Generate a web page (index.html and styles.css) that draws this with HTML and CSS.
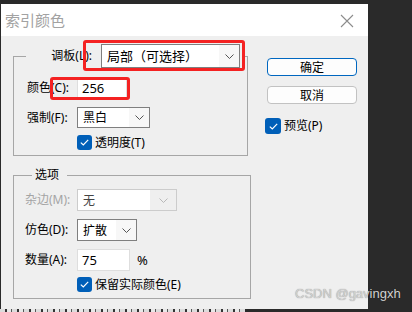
FILE: index.html
```html
<!DOCTYPE html>
<html lang="zh-CN">
<head>
    <meta charset="UTF-8">
    <title>索引颜色</title>
    <link rel="stylesheet" href="styles.css">
</head>
<body>

    <div class="desktop">
        <div class="dialog">
            <div class="titlebar">
                <span class="title">索引颜色</span>
                <svg class="close-icon" width="14" height="14" viewBox="0 0 14 14">
                    <path d="M1 1 L13 13 M13 1 L1 13" stroke="#8c8c8c" stroke-width="1.1" fill="none"/>
                </svg>
            </div>

            <div class="dialog-body">
                <div class="left-col">
                    <fieldset class="group group-palette">
                        <legend class="palette-row">
                            <span class="palette-label">调板(L):</span>
                            <div class="combo combo-palette">
                                <span class="combo-text">局部（可选择）</span>
                                <span class="combo-arrow">
                                    <svg width="9" height="5" viewBox="0 0 9 5"><polyline points="0.5,0.5 4.5,4.5 8.5,0.5" fill="none" stroke="#555" stroke-width="1"/></svg>
                                </span>
                            </div>
                        </legend>

                        <div class="field-row row-colors">
                            <span class="field-label">颜色(C):</span>
                            <div class="text-input input-colors">256</div>
                        </div>
                        <div class="field-row row-forced">
                            <span class="field-label">强制(F):</span>
                            <div class="combo combo-forced">
                                <span class="combo-text">黑白</span>
                                <span class="combo-arrow">
                                    <svg width="9" height="5" viewBox="0 0 9 5"><polyline points="0.5,0.5 4.5,4.5 8.5,0.5" fill="none" stroke="#555" stroke-width="1"/></svg>
                                </span>
                            </div>
                        </div>
                        <div class="check-row row-transparency">
                            <span class="checkbox">
                                <svg width="9" height="7" viewBox="0 0 9 7"><polyline points="0.8,3.6 3.3,6 8.2,0.9" fill="none" stroke="#fff" stroke-width="1.2"/></svg>
                            </span>
                            <span class="check-label">透明度(T)</span>
                        </div>
                    </fieldset>

                    <fieldset class="group group-options">
                        <legend class="group-caption">选项</legend>

                        <div class="field-row row-matte">
                            <span class="field-label disabled">杂边(M):</span>
                            <div class="combo combo-matte disabled">
                                <span class="combo-text">无</span>
                                <span class="combo-arrow">
                                    <svg width="9" height="5" viewBox="0 0 9 5"><polyline points="0.5,0.5 4.5,4.5 8.5,0.5" fill="none" stroke="#b8b8b8" stroke-width="1"/></svg>
                                </span>
                            </div>
                        </div>
                        <div class="field-row row-dither">
                            <span class="field-label">仿色(D):</span>
                            <div class="combo combo-dither">
                                <span class="combo-text">扩散</span>
                                <span class="combo-arrow">
                                    <svg width="9" height="5" viewBox="0 0 9 5"><polyline points="0.5,0.5 4.5,4.5 8.5,0.5" fill="none" stroke="#555" stroke-width="1"/></svg>
                                </span>
                            </div>
                        </div>
                        <div class="field-row row-amount">
                            <span class="field-label">数量(A):</span>
                            <div class="text-input input-amount">75</div>
                            <span class="unit">%</span>
                        </div>
                        <div class="check-row row-preserve">
                            <span class="checkbox">
                                <svg width="9" height="7" viewBox="0 0 9 7"><polyline points="0.8,3.6 3.3,6 8.2,0.9" fill="none" stroke="#fff" stroke-width="1.2"/></svg>
                            </span>
                            <span class="check-label">保留实际颜色(E)</span>
                        </div>
                    </fieldset>
                </div>

                <div class="right-col">
                    <button class="btn btn-default">确定</button>
                    <button class="btn">取消</button>
                    <div class="check-row row-preview">
                        <span class="checkbox">
                            <svg width="9" height="7" viewBox="0 0 9 7"><polyline points="0.8,3.6 3.3,6 8.2,0.9" fill="none" stroke="#fff" stroke-width="1.2"/></svg>
                        </span>
                        <span class="check-label">预览(P)</span>
                    </div>
                </div>
            </div>

            <!-- red annotation boxes -->
            <div class="mark mark-palette"></div>
            <div class="mark mark-colors"></div>
        </div>

        <div class="under-strip"></div>

        <div class="watermark">CSDN @gavingxh</div>
    </div>

</body>
</html>
```

FILE: styles.css
```css
/* Base Styles */
body {
    margin: 0;
    background-color: #2a2a2a;
    font-family: "Noto Sans", "Noto Sans CJK SC", sans-serif;
    font-size: 12px;
    color: #000;
}
.desktop {
    position: relative;
    width: 412px;
    height: 312px;
    overflow: hidden;
    background-color: #2a2a2a;
}
.dialog {
    position: relative;
    margin: 4px 0 0 1px;
    width: 367px;
    height: 305px;
    background-color: #efefef;
}

/* Title bar */
.titlebar {
    display: flex;
    align-items: center;
    height: 32px;
    background-color: #ffffff;
}
.title {
    margin-left: 4px;
    font-family: "Noto Sans CJK SC", sans-serif;
    font-size: 15px;
    line-height: 20px;
    color: #a2a2a2;
}
.close-icon {
    margin-left: auto;
    margin-right: 14px;
    margin-top: 1px;
}

/* Body */
.dialog-body {
    display: flex;
    padding: 8px 0 0 12px;
}
.left-col {
    width: 238px;
}
.right-col {
    display: flex;
    flex-direction: column;
    margin-left: 16px;
    padding-top: 14px;
}

/* Group boxes */
.group {
    margin: 0;
    padding: 0;
    min-width: 0;
    border: 1px solid #a6a6a6;
    box-sizing: border-box;
}
.group-palette {
    width: 235px;
    padding: 9px 0 5px 13px;
}
.group-options {
    width: 238px;
    margin-top: 11px;
    padding: 6px 0 6px 11px;
}
.palette-row {
    display: flex;
    align-items: center;
    height: 24px;
    margin-left: -1px;
    padding: 0 5px 0 0;
}
.palette-label {
    width: 66px;
    text-align: right;
    line-height: 16px;
}
.group-caption {
    margin-left: 7px;
    padding: 0 8px 0 3px;
    line-height: 16px;
}

/* Rows */
.field-row {
    display: flex;
    align-items: center;
}
.field-label {
    width: 50px;
    line-height: 16px;
    white-space: nowrap;
}
.group-options .field-label {
    width: 52px;
}
.field-label.disabled {
    color: #a4a4a4;
}
.row-colors {
    height: 22px;
}
.row-forced {
    height: 21px;
    margin-top: 8px;
}
.row-transparency {
    margin-top: 7px;
    margin-left: 50px;
}
.row-matte,
.row-dither,
.row-amount {
    height: 22px;
}
.row-dither,
.row-amount {
    margin-top: 8px;
}
.row-preserve {
    margin-top: 6px;
    margin-left: 52px;
}

/* Combo boxes */
.combo {
    display: flex;
    align-items: stretch;
    height: 100%;
    box-sizing: border-box;
    border: 1px solid #7f7f7f;
    background-color: #ffffff;
}
.combo-palette {
    width: 139px;
    height: 24px;
    margin-left: 9px;
}
.combo-forced {
    width: 73px;
}
.combo-matte {
    width: 100px;
}
.combo-dither {
    width: 60px;
}
.combo-text {
    flex: 1;
    padding-left: 5px;
    line-height: 19px;
    align-self: center;
    white-space: nowrap;
}
.combo-palette .combo-text {
    font-size: 13px;
}
.combo-arrow {
    display: flex;
    align-items: center;
    justify-content: center;
    width: 20px;
    background-color: #f7f7f7;
}
.combo.disabled {
    border-color: #cccccc;
    background-color: #ffffff;
}
.combo.disabled .combo-text {
    color: #444;
}
.combo.disabled .combo-arrow {
    width: 26px;
    background-color: #efefef;
}

/* Text inputs */
.text-input {
    height: 22px;
    box-sizing: border-box;
    border: 1px solid #dedede;
    background-color: #ffffff;
    padding-left: 4px;
    font-size: 13px;
    line-height: 20px;
}
.input-colors {
    width: 50px;
}
.input-amount {
    width: 53px;
}
.unit {
    margin-left: 7px;
    font-size: 13px;
}

/* Check boxes */
.check-row {
    display: flex;
    align-items: center;
    height: 15px;
}
.checkbox {
    display: flex;
    align-items: center;
    justify-content: center;
    width: 15px;
    height: 15px;
    border-radius: 3px;
    background-color: #005fb8;
}
.check-label {
    margin-left: 3px;
    line-height: 16px;
    white-space: nowrap;
}

/* Buttons */
.btn {
    width: 90px;
    height: 18px;
    padding: 0;
    border: 1px solid #c2c2c2;
    border-radius: 4px;
    background-color: #fdfdfd;
    font-family: "Noto Sans CJK SC", sans-serif;
    font-size: 12px;
    line-height: 14px;
    color: #000;
}
.btn + .btn {
    margin-top: 10px;
}
.btn-default {
    border-color: #0067c0;
}
.row-preview {
    margin-top: 14px;
    margin-left: -2px;
    height: 16px;
}
.row-preview .checkbox {
    width: 16px;
    height: 16px;
}

/* Red annotation boxes */
.mark {
    position: absolute;
    border: 3px solid #f42222;
    border-radius: 3px;
    box-sizing: border-box;
}
.mark-palette {
    left: 82px;
    top: 36px;
    width: 162px;
    height: 31px;
}
.mark-colors {
    left: 49px;
    top: 73px;
    width: 80px;
    height: 23px;
}

/* Bits of the window below */
.under-strip {
    width: 245px;
    height: 3px;
    background: repeating-linear-gradient(90deg, #dcdcdc 0 5px, #333 5px 7px, #e8e8e8 7px 11px, #555 11px 12px);
}
.watermark {
    position: absolute;
    left: 295px;
    top: 286px;
    font-family: "Liberation Sans", sans-serif;
    font-size: 13px;
    line-height: 16px;
    color: #d2d2d2;
    text-shadow: 0 0 1px rgba(0, 0, 0, 0.45);
}
```
